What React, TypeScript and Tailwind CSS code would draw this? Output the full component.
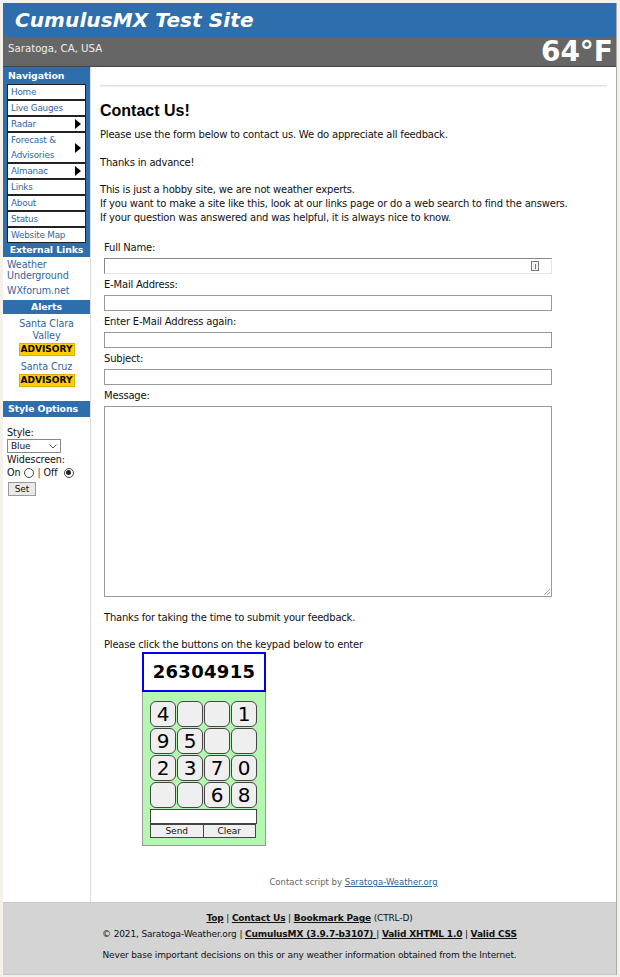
import React from "react";

const V = { fontFamily: '"DejaVu Sans", Verdana, sans-serif' };
const A = { fontFamily: '"Liberation Sans", Arial, sans-serif' };

function Arrow() {
  return (
    <svg width="6" height="10" viewBox="0 0 6 10" className="shrink-0">
      <polygon points="0,0 6,5 0,10" fill="#000" />
    </svg>
  );
}

function NavItem({ label, arrow, tall }: { label: React.ReactNode; arrow?: boolean; tall?: boolean }) {
  return (
    <div className={`flex items-center justify-between border border-[#222] bg-white pl-[3px] pr-[4px] text-[8.8px] tracking-[-0.2px] text-[#336699] ${tall ? "h-[31px] leading-[15px]" : "h-[16px] leading-[14px]"}`}>
      <span>{label}</span>
      {arrow && <Arrow />}
    </div>
  );
}

function SideHead({ children, center, className = "" }: { children: React.ReactNode; center?: boolean; className?: string }) {
  return (
    <div className={`bg-[#2e6eac] text-white font-bold text-[9.4px] tracking-[-0.1px] h-[14px] leading-[14px] whitespace-nowrap ${center ? "text-center" : "pl-[5px]"} ${className}`}>
      {children}
    </div>
  );
}

const keys: string[][] = [
  ["4", "", "", "1"],
  ["9", "5", "", ""],
  ["2", "3", "7", "0"],
  ["", "", "6", "8"],
];

function Field({ label, mt = "mt-[4px]", icon }: { label: string; mt?: string; icon?: boolean }) {
  return (
    <div className={mt}>
      <div className="leading-[13px]">{label}</div>
      <div className={`relative mt-[4px] w-[448px] h-[16px] border ${icon ? "border-[#888] border-r-[#e5e5e5] border-b-[#e5e5e5]" : "border-[#999]"} bg-white`}>
        {icon && (
          <div className="absolute right-[12px] top-[2px] w-[8px] h-[10px] border border-[#777] bg-[#f4f4f4] flex items-center justify-center">
            <div className="w-[1px] h-[5px] bg-[#777]" />
          </div>
        )}
      </div>
    </div>
  );
}

export default function App() {
  return (
    <div className="min-h-[977px] w-[620px] bg-[#f3f1ea] pt-[3px] pl-[3px]" style={V}>
      <div className="w-[614px] border-r border-[#aaa] bg-white">
        {/* Header */}
        <div className="h-[34px] bg-[#2e6eac] pl-[12px] flex items-center">
          <span className="text-white font-bold italic text-[20px] leading-none tracking-[0.1px]">CumulusMX Test Site</span>
        </div>
        <div className="h-[30px] bg-[#666666] border-b border-[#444] flex justify-between">
          <span className="text-[10.2px] text-[#eeeeee] pl-[5px] pt-[5px] leading-[13px]">Saratoga, CA, USA</span>
          <span className="text-white font-bold text-[28px] leading-none self-end pr-[3px]">64°F</span>
        </div>

        <div className="flex">
          {/* Sidebar */}
          <div className="w-[88px] shrink-0 border-r border-[#ddd] bg-white">
            <SideHead className="h-[17px] leading-[17px]">Navigation</SideHead>
            <div className="bg-[#2e6eac] px-[4px]">
              <NavItem label="Home" />
              <NavItem label="Live Gauges" />
              <NavItem label="Radar" arrow />
              <NavItem label={<>Forecast &amp;<br />Advisories</>} arrow tall />
              <NavItem label="Almanac" arrow />
              <NavItem label="Links" />
              <NavItem label="About" />
              <NavItem label="Status" />
              <NavItem label="Website Map" />
            </div>
            <SideHead center className="h-[13px] leading-[13px]">External Links</SideHead>
            <div className="pl-[4px] pt-[2px] text-[9.6px] tracking-[-0.1px] leading-[11px] text-[#336699]">
              <div>Weather<br />Underground</div>
              <div className="mt-[4px]">WXforum.net</div>
            </div>
            <SideHead center className="mt-[4px]">Alerts</SideHead>
            <div className="text-center text-[9.6px] tracking-[-0.1px] leading-[12px] text-[#336699] pt-[4px]">
              <div>Santa Clara<br />Valley</div>
              <div className="mx-auto mt-[1px] w-[56px] h-[13px] bg-[#ffcc00] border border-[#e0b000] text-black font-bold text-[9px] tracking-[0px] leading-[11px]">ADVISORY</div>
              <div className="mt-[5px]">Santa Cruz</div>
              <div className="mx-auto mt-[1px] w-[56px] h-[13px] bg-[#ffcc00] border border-[#e0b000] text-black font-bold text-[9px] tracking-[0px] leading-[11px]">ADVISORY</div>
            </div>
            <SideHead className="mt-[14px] h-[16px] leading-[16px]">Style Options</SideHead>
            <div className="pl-[4px] pt-[9px] text-[9.6px] tracking-[-0.1px] leading-[13px] text-[#111]">
              <div>Style:</div>
              <div className="w-[54px] h-[14px] border border-[#888] bg-white flex items-center justify-between px-[3px] text-[9px]">
                <span>Blue</span>
                <svg width="8" height="5" viewBox="0 0 8 5"><polyline points="0.5,0.5 4,4 7.5,0.5" fill="none" stroke="#555" strokeWidth="1" /></svg>
              </div>
              <div>Widescreen:</div>
              <div className="flex items-center h-[13px]">
                <span>On</span>
                <span className="ml-[4px] inline-block w-[10px] h-[10px] rounded-full border border-[#444]" />
                <span className="ml-[3px] text-[#a0282a]">|</span>
                <span className="ml-[3px]">Off</span>
                <span className="ml-[6px] w-[10px] h-[10px] rounded-full border border-[#444] flex items-center justify-center">
                  <span className="w-[5px] h-[5px] rounded-full bg-[#222]" />
                </span>
              </div>
              <div className="mt-[3px] ml-[1px] w-[28px] h-[14px] border border-[#999] bg-[#e9e9e9] text-[9px] leading-[12px] text-center">Set</div>
            </div>
          </div>

          {/* Main */}
          <div className="flex-1 h-[835px] pl-[9px] pr-[9px] pt-[18px] text-[10px] tracking-[-0.2px] leading-[14px] text-[#111] flex flex-col">
            <div className="h-[2px] border-t border-[#e3e1da] bg-[#f3f1ea]" />
            <h1 className="mt-[14px] text-[16px] tracking-normal font-bold text-black leading-[20px]" style={A}>Contact Us!</h1>
            <p className="mt-[7px]">Please use the form below to contact us. We do appreciate all feedback.</p>
            <p className="mt-[14px]">Thanks in advance!</p>
            <p className="mt-[13px]">
              This is just a hobby site, we are not weather experts.<br />
              If you want to make a site like this, look at our links page or do a web search to find the answers.<br />
              If your question was answered and was helpful, it is always nice to know.
            </p>
            <div className="pl-[4px] mt-[16px]">
              <Field label="Full Name:" mt="mt-0" icon />
              <Field label="E-Mail Address:" />
              <Field label="Enter E-Mail Address again:" />
              <Field label="Subject:" />
              <div className="mt-[4px]">
                <div className="leading-[13px]">Message:</div>
                <div className="relative mt-[4px] w-[448px] h-[191px] border border-[#999] bg-white">
                  <svg className="absolute right-[1px] bottom-[1px]" width="7" height="7" viewBox="0 0 7 7">
                    <line x1="1" y1="7" x2="7" y2="1" stroke="#aaa" />
                    <line x1="4" y1="7" x2="7" y2="4" stroke="#aaa" />
                  </svg>
                </div>
              </div>
              <p className="mt-[14px]">Thanks for taking the time to submit your feedback.</p>
              <p className="mt-[13px]">Please click the buttons on the keypad below to enter</p>
              <div className="ml-[38px] w-[124px] tracking-normal">
                <div className="h-[40px] border-2 border-[#0000ee] bg-white flex items-center justify-center text-[18px] font-bold text-black tracking-[0.3px]">26304915</div>
                <div className="h-[154px] bg-[#b3f7b0] border border-[#999] border-t-0 pt-[9px] pl-[7px]">
                  <div className="grid grid-cols-[repeat(4,26px)] gap-[1px] w-[107px]">
                    {keys.flat().map((k, i) => (
                      <div key={i} className="h-[26px] rounded-[6px] border border-[#444] bg-[#efefef] flex items-center justify-center text-[20px] text-black leading-none">
                        {k}
                      </div>
                    ))}
                  </div>
                  <div className="mt-[1px] w-[107px] h-[15px] border border-[#444] bg-white" />
                  <div className="flex w-[106px]">
                    <div className="flex-1 h-[14px] border border-[#444] bg-[#efefef] text-[9px] leading-[12px] text-center">Send</div>
                    <div className="flex-1 h-[14px] border border-l-0 border-[#444] bg-[#efefef] text-[9px] leading-[12px] text-center">Clear</div>
                  </div>
                </div>
              </div>
            </div>
            <div className="mt-auto pb-[15px] text-center text-[8.5px] tracking-normal text-[#666] leading-[10px]">
              Contact script by <span className="text-[#336699] underline">Saratoga-Weather.org</span>
            </div>
          </div>
        </div>

        {/* Footer */}
        <div className="bg-[#d4d4d4] border-t border-[#c8c8c8] border-b border-[#aaa] pt-[9px] pb-[13px] text-center text-[9px] tracking-[-0.15px] leading-[12px] text-[#111]">
          <div>
            <span className="font-bold underline">Top</span> | <span className="font-bold underline">Contact Us</span> | <span className="font-bold underline">Bookmark Page</span> (CTRL-D)
          </div>
          <div className="mt-[4px]">
            © 2021, Saratoga-Weather.org | <span className="font-bold underline">CumulusMX (3.9.7-b3107) </span>| <span className="font-bold underline">Valid XHTML 1.0</span> | <span className="font-bold underline">Valid CSS</span>
          </div>
          <div className="mt-[9px]">Never base important decisions on this or any weather information obtained from the Internet.</div>
        </div>
      </div>
    </div>
  );
}
